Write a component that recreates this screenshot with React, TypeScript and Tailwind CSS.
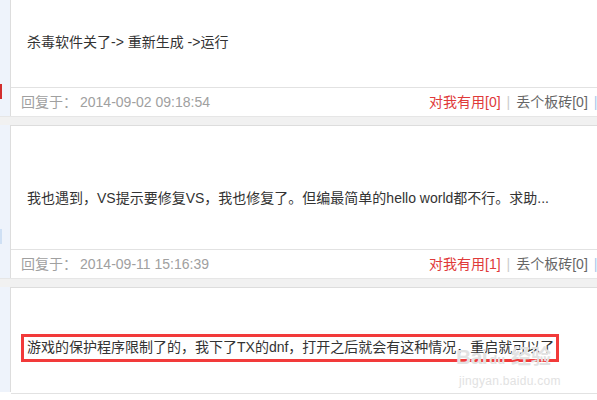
import React from 'react';

type Post = {
	text: string;
	pt: string;
	pb: string;
	date?: string;
	useful?: number;
	boxed?: boolean;
};

const posts: Post[] = [
	{text: '杀毒软件关了-> 重新生成 ->运行', pt: 'pt-[31px]', pb: 'pb-[34px]', date: '2014-09-02 09:18:54', useful: 0},
	{
		text: '我也遇到，VS提示要修复VS，我也修复了。但编最简单的hello world都不行。求助...',
		pt: 'pt-[61px]',
		pb: 'pb-[40px]',
		date: '2014-09-11 15:16:39',
		useful: 1
	},
	{
		text: '游戏的保护程序限制了的，我下了TX的dnf，打开之后就会有这种情况，重启就可以了',
		pt: 'pt-[48px]',
		pb: 'pb-[34px]',
		boxed: true
	},
];

const Sep = ({light}: { light?: boolean }) => (
	<span className={light ? 'mx-[6px] text-[#a8c8ea]' : 'mx-[6px] text-[#cccccc]'}>|</span>
);

const Footer = ({date, useful}: { date: string; useful: number }) => (
	<div className="h-[29px] border-t border-[#e2e2e2] flex items-center pl-[10px] text-[14px] whitespace-nowrap">
		<div className="w-[408px] shrink-0 text-[#a0a0a0]">
			回复于：<span className="ml-[3px]">{date}</span>
		</div>
		<span className="shrink-0 text-[#e03a3a]">对我有用[{useful}]</span>
		<Sep/>
		<span className="shrink-0 text-[#666666]">丢个板砖[0]</span>
		<Sep light/>
		<span className="shrink-0 text-[#666666]">引用</span>
	</div>
);

const PostRow = ({post, index}: { post: Post; index: number }) => (
	<div className="flex">
		<div className="w-[10px] shrink-0 bg-[#eef3fb] border-r border-[#dddddd] relative box-content">
			{index === 0 && <div className="absolute left-0 top-[84px] w-[2px] h-[15px] bg-[#d22d2d]"/>}
			{index === 1 && <div className="absolute left-0 top-[104px] w-[2px] h-[15px] bg-[#cfe0f4]"/>}
		</div>
		<div className={`flex-1 min-w-0 overflow-hidden ${index > 0 ? 'border-t border-[#dddddd]' : ''}`}>
			<div className={`px-[16px] ${post.pt} ${post.pb}`}>
				<div className="relative text-[14px] leading-[22px] text-[#333333] whitespace-nowrap">
					{post.text}
					{post.boxed && (
						<div className="absolute left-[-6px] top-[-2px] w-[538px] h-[28px] border-[3px] border-[#f23a3a]"/>
					)}
				</div>
			</div>
			{post.date && <Footer date={post.date} useful={post.useful ?? 0}/>}
		</div>
	</div>
);

export default function App() {
	return (
		<div
			className="relative w-[597px] h-[400px] overflow-hidden bg-white font-['Liberation_Sans','Noto_Sans_CJK_SC',sans-serif]">
			{posts.map((post, i) => (
				<React.Fragment key={i}>
					<PostRow post={post} index={i}/>
					{i < posts.length - 1 && <div className="h-[9px] bg-[#f1f1f1] border-t border-[#e6e6e6]"/>}
				</React.Fragment>
			))}
			<div className="absolute left-[11px] top-[393px] w-full h-[1px] bg-[#e2e2e2]"/>

			{/* baidu jingyan watermark */}
			<div className="absolute left-[456px] top-[346px] text-[#e2e2e2] select-none">
				<div className="flex items-end leading-none font-bold">
					<span className="text-[21px] tracking-[-0.5px]">Bai</span>
					<span className="text-[13px] ml-[2px] mb-[1px]">du</span>
					<span className="text-[20px] ml-[6px]">经验</span>
				</div>
				<div className="text-[12px] leading-none mt-[8px] ml-[3px] tracking-[0.3px]">jingyan.baidu.com</div>
			</div>
		</div>
	);
}
